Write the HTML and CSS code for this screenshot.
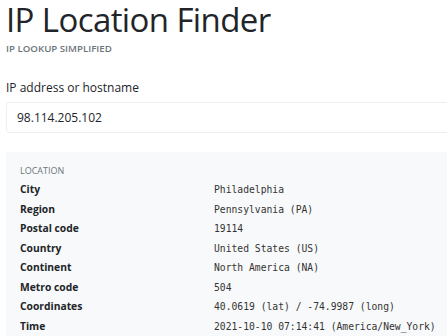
FILE: index.html
```html
<!DOCTYPE html>
<html lang="en">
<head>
    <meta charset="UTF-8">
    <meta name="viewport" content="width=device-width, initial-scale=1.0">
    <title>IP Location Finder</title>
    <link rel="stylesheet" href="styles.css">
</head>
<body>
    <div class="page">
        <!-- Header -->
        <h1 class="title">IP Location Finder</h1>
        <div class="subtitle">IP lookup simplified</div>

        <!-- Lookup form -->
        <form class="lookup">
            <label for="ip" class="lookup-label">IP address or hostname</label>
            <input type="text" id="ip" class="lookup-input" value="98.114.205.102">
        </form>

        <!-- Result panel -->
        <div class="result">
            <div class="result-heading">Location</div>
            <dl class="result-list">
                <dt>City</dt><dd>Philadelphia</dd>
                <dt>Region</dt><dd>Pennsylvania (PA)</dd>
                <dt>Postal code</dt><dd>19114</dd>
                <dt>Country</dt><dd>United States (US)</dd>
                <dt>Continent</dt><dd>North America (NA)</dd>
                <dt>Metro code</dt><dd>504</dd>
                <dt>Coordinates</dt><dd>40.0619 (lat) / -74.9987 (long)</dd>
                <dt>Time</dt><dd>2021-10-10 07:14:41 (America/New_York)</dd>
            </dl>
        </div>
    </div>
</body>
</html>
```

FILE: styles.css
```css
body {
    margin: 0;
    padding: 0;
    font-family: "Open Sans", "Noto Sans", Arial, sans-serif;
    color: #212529;
    background: #fff;
    overflow: hidden;
}

.page {
    width: 480px;
    padding-left: 6px;
}

/* Header */
.title {
    font-size: 33px;
    font-weight: 500;
    line-height: 40px;
    margin: 0;
    letter-spacing: -0.6px;
}

.subtitle {
    font-size: 9.7px;
    font-weight: 600;
    text-transform: uppercase;
    color: #6c757d;
    margin-top: 2px;
}

/* Lookup form */
.lookup {
    margin-top: 24px;
}

.lookup-label {
    display: block;
    font-size: 12px;
    margin-bottom: 6px;
}

.lookup-input {
    display: block;
    box-sizing: border-box;
    width: 100%;
    height: 31px;
    padding: 0 10px;
    font-family: inherit;
    font-size: 12px;
    color: #212529;
    border: 1px solid #eceef0;
    border-radius: 3px;
    outline: none;
}

/* Result panel */
.result {
    margin-top: 19px;
    background: #f8f9fa;
    padding: 12px 14px 20px;
}

.result-heading {
    font-size: 9px;
    text-transform: uppercase;
    color: #6c757d;
    margin-bottom: 3px;
}

.result-list {
    display: grid;
    grid-template-columns: 194px 1fr;
    margin: 0;
}

.result-list dt {
    font-weight: 700;
    font-size: 10.3px;
    line-height: 19.5px;
}

.result-list dd {
    margin: 0;
    font-family: "DejaVu Sans Mono", monospace;
    font-size: 9.7px;
    line-height: 19.5px;
    color: #333;
}
```
